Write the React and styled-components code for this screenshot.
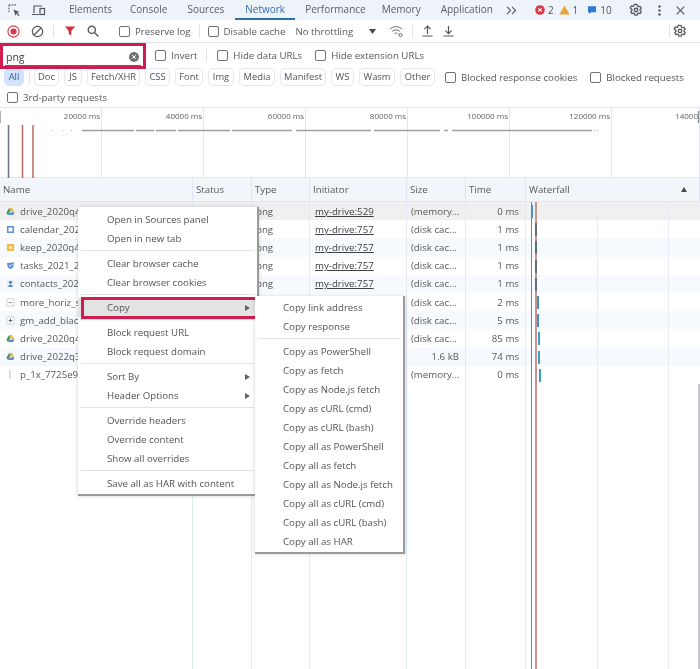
import React from 'react';
import styled, { createGlobalStyle } from 'styled-components';

const GlobalStyle = createGlobalStyle`
  html, body {
    margin: 0;
    padding: 0;
    background: #fff;
  }
  body {
    font-family: 'Open Sans', 'Liberation Sans', sans-serif;
    font-size: 9.7px;
    color: #474747;
  }
`;

const Page = styled.div`
  position: relative;
  width: 700px;
  height: 669px;
  overflow: hidden;
  background: #fff;
  filter: blur(0.4px);
`;

const TabBar = styled.div`
  display: flex;
  align-items: center;
  height: 20px;
  background: #eef2f9;
  padding-left: 7px;
`;

const IconSlot = styled.span`
  display: inline-flex;
  align-items: center;
  justify-content: center;
  flex: none;
  width: ${p => p.$w || 16}px;
  margin-left: ${p => p.$ml || 0}px;
`;

const Tab = styled.span`
  height: 20px;
  line-height: 18px;
  padding: 0 10px;
  margin-left: ${p => p.$ml || 0}px;
  margin-right: ${p => p.$mr || 0}px;
  font-size: 10px;
  color: ${p => (p.$active ? '#2f6db5' : '#5a5d62')};
  border-bottom: 2px solid ${p => (p.$active ? '#2f6db5' : 'transparent')};
  box-sizing: border-box;
  white-space: nowrap;
`;

const Count = styled.span`
  font-size: 10px;
  color: #555;
  margin: 0 ${p => p.$mr || 6}px 0 3px;
`;

const Toolbar = styled.div`
  display: flex;
  align-items: center;
  height: 22px;
  padding-left: 6px;
  border-bottom: 1px solid #e3e6ea;
`;

const Divider = styled.span`
  width: 1px;
  height: 13px;
  background: #dfe2e6;
  flex: none;
  margin: 0 ${p => p.$mr ?? 6}px 0 ${p => p.$ml ?? 6}px;
`;

const CheckLabel = styled.label`
  display: inline-flex;
  align-items: center;
  gap: 5px;
  font-size: 9.7px;
  color: #55585c;
  white-space: nowrap;
  margin-left: ${p => p.$ml || 0}px;
`;

const Box = styled.span`
  width: 9px;
  height: 9px;
  border: 1px solid #6d7075;
  border-radius: 2px;
  flex: none;
`;

const FilterRow = styled.div`
  display: flex;
  align-items: center;
  height: 24px;
`;

const FilterBox = styled.div`
  position: relative;
  display: flex;
  align-items: center;
  justify-content: space-between;
  box-sizing: border-box;
  width: 146px;
  height: 26px;
  margin: 2px 9px 0 0;
  padding: 1px 4px 0 3px;
  border: 3px solid #cf1d52;
  font-size: 10.5px;
  color: #444;
  flex: none;
`;

const FilterUnderline = styled.span`
  position: absolute;
  left: 2px;
  right: 2px;
  bottom: 0;
  height: 1px;
  background: #2f6db5;
`;

const ChipRow = styled.div`
  display: flex;
  align-items: center;
  height: 20px;
  padding-left: 4px;
`;

const Chip = styled.span`
  box-sizing: border-box;
  flex: none;
  width: ${p => p.$w}px;
  height: 18px;
  line-height: 16px;
  margin-right: 5px;
  text-align: center;
  font-size: 9.4px;
  border-radius: 5px;
  border: 1px solid ${p => (p.$on ? '#d3e3fb' : '#e2e8f1')};
  background: ${p => (p.$on ? '#d3e3fb' : '#fff')};
  color: ${p => (p.$on ? '#2f5f9e' : '#505356')};
  white-space: nowrap;
`;

const ThirdRow = styled.div`
  display: flex;
  align-items: center;
  height: 20px;
  padding-left: 7px;
  border-bottom: 1px solid #e3e6ea;
`;

const Overview = styled.div`
  position: relative;
  display: flex;
  height: 70px;
  border-bottom: 1px solid #e3e6ea;
  box-sizing: border-box;
`;

const OverviewCell = styled.div`
  box-sizing: border-box;
  flex: none;
  width: ${p => p.$w}px;
  padding: 2px 1px 0 0;
  text-align: right;
  font-size: 8px;
  color: #5f6266;
  border-right: 1px solid #e2e8f1;
  white-space: nowrap;
  overflow: hidden;
`;

const OverviewChart = styled.svg`
  position: absolute;
  left: 0;
  top: 0;
`;

const Grid = styled.div`
  display: grid;
  grid-template-columns: 193px 59px 58px 97px 59px 60px 174px;
`;

const HeadCell = styled.div`
  box-sizing: border-box;
  display: flex;
  align-items: center;
  justify-content: space-between;
  height: 24px;
  padding: 0 ${p => p.$pr || 4}px 0 3px;
  background: #f2f5fa;
  border-right: 1px solid #dfe6ef;
  border-bottom: 1px solid #dfe6ef;
  font-size: 9.7px;
  color: #55585c;
`;

const Cell = styled.div`
  box-sizing: border-box;
  display: flex;
  align-items: center;
  justify-content: ${p => (p.$right ? 'flex-end' : 'flex-start')};
  gap: 5px;
  height: 18.2px;
  padding: 0 ${p => (p.$right ? 6 : 4)}px 0 ${p => p.$pl || 4}px;
  background: ${p => p.$bg};
  border-right: 1px solid #e3eaf3;
  font-size: 9.7px;
  color: #55585c;
  white-space: nowrap;
  overflow: hidden;
`;

const Link = styled.span`
  text-decoration: underline;
  color: #3f4144;
`;

const Waterfall = styled.div`
  position: relative;
  height: 18.2px;
  background: ${p => p.$bg};
`;

const FallGuide = styled.span`
  position: absolute;
  top: 0;
  bottom: 0;
  left: ${p => p.$x}px;
  width: ${p => p.$w || 1}px;
  background: ${p => p.$color};
`;

const FallBar = styled.span`
  position: absolute;
  top: 3px;
  height: 13px;
  left: ${p => p.$x}px;
  width: ${p => p.$w}px;
  background: ${p => p.$color};
`;

const Filler = styled.div`
  display: grid;
  grid-template-columns: 193px 59px 58px 97px 59px 60px 174px;
  height: 286px;
`;

const FillerColumn = styled.div`
  position: relative;
  border-right: ${p => (p.$last ? '2px solid #c9cbce' : '1px solid #e3eaf3')};
`;

const Menu = styled.div`
  position: absolute;
  left: ${p => p.$x}px;
  top: ${p => p.$y}px;
  width: ${p => p.$w}px;
  box-sizing: border-box;
  padding: ${p => p.$pad};
  background: #fff;
  border-right: 2px solid #9a9a9a;
  border-bottom: 2px solid #9a9a9a;
  box-shadow: 0 0 4px rgba(0, 0, 0, 0.18);
  z-index: ${p => p.$z || 2};
`;

const MenuItem = styled.div`
  position: relative;
  display: flex;
  align-items: center;
  justify-content: space-between;
  box-sizing: border-box;
  height: 19px;
  padding: 0 7px 0 ${p => p.$pl || 29}px;
  font-size: 9.7px;
  color: #505356;
  white-space: nowrap;
  background: ${p => (p.$hl ? '#e3e3e3' : 'transparent')};
`;

const MenuSep = styled.div`
  height: 1px;
  margin: 2px 3px 3px;
  background: #e2e2e2;
`;

const CopyHighlight = styled.div`
  position: absolute;
  inset: -1px -1px -2px 3px;
  border: 3px solid #cf1d52;
  pointer-events: none;
  z-index: 3;
`;

const Arrow = styled.span`
  width: 0;
  height: 0;
  border-left: 5px solid #5f6266;
  border-top: 3.5px solid transparent;
  border-bottom: 3.5px solid transparent;
`;

const SortUp = styled.span`
  width: 0;
  height: 0;
  margin-right: 4px;
  border-bottom: 5px solid #4a4a4a;
  border-left: 3.5px solid transparent;
  border-right: 3.5px solid transparent;
`;

const Gear = ({ size = 14 }) => (
  <svg width={size} height={size} viewBox="0 0 24 24" fill="none" stroke="#55585c" strokeWidth="2.2">
    <path d="M12 2.5l2 .4.7 2.6 1.6.9 2.6-.8 2 3.4-1.9 1.9v1.9l1.9 1.9-2 3.4-2.6-.8-1.6.9-.7 2.6h-4l-.7-2.6-1.6-.9-2.6.8-2-3.4 1.9-1.9v-1.9L2.1 8.4l2-3.4 2.6.8 1.6-.9.7-2.6z" strokeLinejoin="round" />
    <circle cx="12" cy="12" r="3" />
  </svg>
);

const FileIcon = ({ kind }) => {
  if (kind === 'drive') {
    return (
      <svg width="9" height="9" viewBox="0 0 10 10">
        <path d="M3.5 1h3l3 5H6.6z" fill="#e8b93a" />
        <path d="M3.5 1L.5 6.2 2 9l3-5z" fill="#3f9b63" />
        <path d="M2 9h6l1.5-3H3.6z" fill="#5b8fd8" />
      </svg>
    );
  }
  if (kind === 'calendar') {
    return (
      <svg width="9" height="9" viewBox="0 0 10 10">
        <rect x="1" y="1" width="8" height="8" rx="1" fill="#5b8fd8" />
        <rect x="2.8" y="2.8" width="4.4" height="4.4" fill="#fff" />
      </svg>
    );
  }
  if (kind === 'keep') {
    return (
      <svg width="9" height="9" viewBox="0 0 10 10">
        <rect x="1" y="1" width="8" height="8" rx="1" fill="#f2bd42" />
        <circle cx="5" cy="5" r="1.7" fill="#fff3c9" />
      </svg>
    );
  }
  if (kind === 'tasks') {
    return (
      <svg width="9" height="9" viewBox="0 0 10 10">
        <path d="M1 2.5L9 1.5 8 7 5 9.3 2 7z" fill="#5b8fd8" />
        <path d="M3.5 4.5L5 6l2-2.4" stroke="#fff" fill="none" strokeWidth="1" />
      </svg>
    );
  }
  if (kind === 'contacts') {
    return (
      <svg width="9" height="9" viewBox="0 0 10 10">
        <rect x="1" y="1" width="8" height="8" fill="#e8eef8" />
        <circle cx="5" cy="3.8" r="1.5" fill="#2f6db5" />
        <path d="M2.5 8.5C2.5 6 7.5 6 7.5 8.5z" fill="#2f6db5" />
      </svg>
    );
  }
  if (kind === 'more') {
    return (
      <svg width="9" height="9" viewBox="0 0 10 10">
        <rect x="1" y="1" width="8" height="8" fill="#fff" stroke="#c4c6c9" strokeWidth="0.8" />
        <path d="M2.8 5h4.4" stroke="#8b8d90" strokeWidth="1" />
      </svg>
    );
  }
  if (kind === 'add') {
    return (
      <svg width="9" height="9" viewBox="0 0 10 10">
        <rect x="1" y="1" width="8" height="8" fill="#fff" stroke="#c4c6c9" strokeWidth="0.8" />
        <path d="M5 3v4M3 5h4" stroke="#55585c" strokeWidth="1" />
      </svg>
    );
  }
  return (
    <svg width="9" height="9" viewBox="0 0 10 10">
      <path d="M4.5 0v10" stroke="#bfc1c4" strokeWidth="1.2" />
    </svg>
  );
};

const bars = {
  first: { x: 4.5, w: 2.5, color: '#3d93c9' },
  grey: { x: 9, w: 2, color: '#5f6f80' },
  mid: { x: 10.5, w: 2.5, color: '#3d93c9' },
  late: { x: 12, w: 2, color: '#36a0c9' },
  last: { x: 13, w: 2, color: '#36a0c9' },
};

const rows = [
  { name: 'drive_2020q4', icon: 'drive', init: 'my-drive:529', size: '(memory...', time: '0 ms', bar: bars.first },
  { name: 'calendar_2020', icon: 'calendar', init: 'my-drive:757', size: '(disk cac...', time: '1 ms', bar: bars.grey },
  { name: 'keep_2020q4', icon: 'keep', init: 'my-drive:757', size: '(disk cac...', time: '1 ms', bar: bars.grey },
  { name: 'tasks_2021_2', icon: 'tasks', init: 'my-drive:757', size: '(disk cac...', time: '1 ms', bar: bars.grey },
  { name: 'contacts_2022', icon: 'contacts', init: 'my-drive:757', size: '(disk cac...', time: '1 ms', bar: bars.grey },
  { name: 'more_horiz_s', icon: 'more', size: '(disk cac...', time: '2 ms', bar: bars.mid },
  { name: 'gm_add_black', icon: 'add', size: '(disk cac...', time: '5 ms', bar: bars.mid },
  { name: 'drive_2020q4', icon: 'drive', size: '(disk cac...', time: '85 ms', bar: bars.late },
  { name: 'drive_2022q3', icon: 'drive', size: '1.6 kB', right: true, time: '74 ms', bar: bars.late },
  { name: 'p_1x_7725e9', icon: 'line', size: '(memory...', time: '0 ms', bar: bars.last },
];

const chips = [
  ['Doc', 25],
  ['JS', 18],
  ['Fetch/XHR', 53],
  ['CSS', 25],
  ['Font', 28],
  ['Img', 26],
  ['Media', 36],
  ['Manifest', 46],
  ['WS', 23],
  ['Wasm', 36],
  ['Other', 35],
];

const mainMenu = [
  ['Open in Sources panel', 'Open in new tab'],
  ['Clear browser cache', 'Clear browser cookies'],
  ['Copy'],
  ['Block request URL', 'Block request domain'],
  ['Sort By', 'Header Options'],
  ['Override headers', 'Override content', 'Show all overrides'],
  ['Save all as HAR with content'],
];

const copyMenu = [
  ['Copy link address', 'Copy response'],
  [
    'Copy as PowerShell',
    'Copy as fetch',
    'Copy as Node.js fetch',
    'Copy as cURL (cmd)',
    'Copy as cURL (bash)',
    'Copy all as PowerShell',
    'Copy all as fetch',
    'Copy all as Node.js fetch',
    'Copy all as cURL (cmd)',
    'Copy all as cURL (bash)',
    'Copy all as HAR',
  ],
];

const hasArrow = label => label === 'Sort By' || label === 'Header Options';

const WaterfallLines = () => (
  <>
    <FallGuide $x={71} $color="#e8ecf2" />
    <FallGuide $x={142} $color="#e8ecf2" />
    <FallGuide $x={5} $color="#4f8fc0" />
    <FallGuide $x={9} $w={2} $color="#c9948c" />
  </>
);

const App = () => {
  return (
    <Page>
      <GlobalStyle />
      <TabBar>
        <IconSlot $w={14}>
          <svg width="13" height="13" viewBox="0 0 14 14" fill="none" stroke="#55585c" strokeWidth="1.2">
            <path d="M1 1h8M1 1v8" strokeDasharray="1.6 1.4" />
            <path d="M6 6l6.5 2.5-2.5 1 2.5 3-1 .8-2.6-3-1 2.6z" fill="#55585c" stroke="none" />
          </svg>
        </IconSlot>
        <IconSlot $w={16} $ml={9}>
          <svg width="15" height="13" viewBox="0 0 15 13" fill="none" stroke="#55585c" strokeWidth="1.2">
            <path d="M3 9V2h8M1 10.5h7" />
            <rect x="9" y="4.5" width="4.5" height="6" />
          </svg>
        </IconSlot>
        <Tab $ml={13} $mr={-2}>Elements</Tab>
        <Tab>Console</Tab>
        <Tab $mr={1}>Sources</Tab>
        <Tab $active>Network</Tab>
        <Tab $mr={-4}>Performance</Tab>
        <Tab>Memory</Tab>
        <Tab>Application</Tab>
        <IconSlot $w={12} $ml={3}>
          <svg width="11" height="9" viewBox="0 0 11 9" fill="none" stroke="#55585c" strokeWidth="1.1">
            <path d="M1 .8L4.6 4.5 1 8.2M6 .8l3.6 3.7L6 8.2" />
          </svg>
        </IconSlot>
        <IconSlot $w={10} $ml={17}>
          <svg width="10" height="10" viewBox="0 0 10 10">
            <circle cx="5" cy="5" r="4.8" fill="#d93a45" />
            <path d="M3.3 3.3l3.4 3.4M6.7 3.3L3.3 6.7" stroke="#fff" strokeWidth="1.1" />
          </svg>
        </IconSlot>
        <Count $mr={5}>2</Count>
        <IconSlot $w={11}>
          <svg width="11" height="10" viewBox="0 0 11 10">
            <path d="M5.5.5L10.7 9.5H.3z" fill="#e8a33a" />
          </svg>
        </IconSlot>
        <Count $mr={9}>1</Count>
        <IconSlot $w={10}>
          <svg width="10" height="10" viewBox="0 0 10 10">
            <path d="M1 1.2h8v6H4L2 9V7.2H1z" fill="#2f78d3" />
          </svg>
        </IconSlot>
        <Count $mr={17}>10</Count>
        <IconSlot $w={14}>
          <Gear size={14} />
        </IconSlot>
        <IconSlot $w={4} $ml={15}>
          <svg width="3" height="11" viewBox="0 0 3 11" fill="#55585c">
            <circle cx="1.5" cy="1.5" r="1.2" />
            <circle cx="1.5" cy="5.5" r="1.2" />
            <circle cx="1.5" cy="9.5" r="1.2" />
          </svg>
        </IconSlot>
        <IconSlot $w={10} $ml={14}>
          <svg width="9" height="9" viewBox="0 0 9 9" stroke="#55585c" strokeWidth="1.2">
            <path d="M.7.7l7.6 7.6M8.3.7L.7 8.3" />
          </svg>
        </IconSlot>
      </TabBar>

      <Toolbar>
        <IconSlot $w={14}>
          <svg width="13" height="13" viewBox="0 0 14 14">
            <circle cx="7" cy="7" r="6" fill="none" stroke="#d6374a" strokeWidth="1.2" />
            <circle cx="7" cy="7" r="3.3" fill="#d6374a" />
          </svg>
        </IconSlot>
        <IconSlot $w={14} $ml={10}>
          <svg width="13" height="13" viewBox="0 0 14 14" fill="none" stroke="#55585c" strokeWidth="1.3">
            <circle cx="7" cy="7" r="5.6" />
            <path d="M3 11L11 3" />
          </svg>
        </IconSlot>
        <Divider $ml={9} $mr={9} />
        <IconSlot $w={11} $ml={1}>
          <svg width="10" height="10" viewBox="0 0 10 10">
            <path d="M0 .5h10L6.2 5v4.5L3.8 8V5z" fill="#d92b3a" />
          </svg>
        </IconSlot>
        <IconSlot $w={14} $ml={11}>
          <svg width="12" height="12" viewBox="0 0 12 12" fill="none" stroke="#55585c" strokeWidth="1.4">
            <circle cx="4.8" cy="4.8" r="3.6" />
            <path d="M7.5 7.5L11.4 11.4" />
          </svg>
        </IconSlot>
        <CheckLabel $ml={19}>
          <Box />
          Preserve log
        </CheckLabel>
        <Divider $ml={8} $mr={8} />
        <CheckLabel>
          <Box />
          Disable cache
        </CheckLabel>
        <CheckLabel $ml={10}>No throttling</CheckLabel>
        <IconSlot $w={8} $ml={15}>
          <svg width="7" height="5" viewBox="0 0 7 5">
            <path d="M0 0h7L3.5 5z" fill="#4a4a4a" />
          </svg>
        </IconSlot>
        <IconSlot $w={16} $ml={12}>
          <svg width="15" height="13" viewBox="0 0 15 13" fill="none" stroke="#6a6d71" strokeWidth="1">
            <path d="M1 4c3.5-3.2 8.5-3.2 12 0M3.2 6.4c2.2-2 5.4-2 7.6 0M5.5 8.6c.9-.7 2.1-.7 3 0" />
            <circle cx="11.5" cy="10" r="1.6" />
          </svg>
        </IconSlot>
        <Divider $ml={8} $mr={8} />
        <IconSlot $w={12}>
          <svg width="11" height="12" viewBox="0 0 11 12" fill="none" stroke="#55585c" strokeWidth="1.2">
            <path d="M5.5 9V1.2M2.4 4.2l3.1-3.1 3.1 3.1M.5 11h10" />
          </svg>
        </IconSlot>
        <IconSlot $w={12} $ml={9}>
          <svg width="11" height="12" viewBox="0 0 11 12" fill="none" stroke="#55585c" strokeWidth="1.2">
            <path d="M5.5 1v7.6M2.4 5.6l3.1 3.1 3.1-3.1M.5 11h10" />
          </svg>
        </IconSlot>
        <Divider $ml={215} $mr={0} />
        <IconSlot $w={14} $ml={3}>
          <Gear size={14} />
        </IconSlot>
      </Toolbar>

      <FilterRow>
        <FilterBox>
          png
          <svg width="10" height="10" viewBox="0 0 10 10">
            <circle cx="5" cy="5" r="5" fill="#707377" />
            <path d="M3.2 3.2l3.6 3.6M6.8 3.2L3.2 6.8" stroke="#fff" strokeWidth="1" />
          </svg>
          <FilterUnderline />
        </FilterBox>
        <CheckLabel>
          <Box />
          Invert
        </CheckLabel>
        <Divider $ml={9} $mr={10} />
        <CheckLabel>
          <Box />
          Hide data URLs
        </CheckLabel>
        <CheckLabel $ml={13}>
          <Box />
          Hide extension URLs
        </CheckLabel>
      </FilterRow>

      <ChipRow>
        <Chip $on $w={20}>All</Chip>
        <Divider $ml={0} $mr={4} />
        {chips.map(([label, w]) => (
          <Chip key={label} $w={w}>{label}</Chip>
        ))}
        <CheckLabel $ml={5}>
          <Box />
          Blocked response cookies
        </CheckLabel>
        <CheckLabel $ml={13}>
          <Box />
          Blocked requests
        </CheckLabel>
      </ChipRow>

      <ThirdRow>
        <CheckLabel>
          <Box />
          3rd-party requests
        </CheckLabel>
      </ThirdRow>

      <Overview>
        <OverviewCell $w={102}>20000 ms</OverviewCell>
        <OverviewCell $w={102}>40000 ms</OverviewCell>
        <OverviewCell $w={102}>60000 ms</OverviewCell>
        <OverviewCell $w={102}>80000 ms</OverviewCell>
        <OverviewCell $w={102}>100000 ms</OverviewCell>
        <OverviewCell $w={102}>120000 ms</OverviewCell>
        <OverviewCell $w={88}>14000</OverviewCell>
        <OverviewChart width="700" height="70" viewBox="0 0 700 70">
          <path d="M8.5 17V70" stroke="#6b6f8a" strokeWidth="1.5" />
          <path d="M22.5 17V70M33 17V70" stroke="#c4716f" strokeWidth="1.6" />
          <path d="M82 22.5h52M136 22.5h18M156 22.5h20M178 22.5h52M232 22.5h60M296 22.5h75M374 22.5h66M444 22.5h4M452 22.5h140" stroke="#9d9fa2" strokeWidth="1.5" />
          <path d="M52 22.5h1M62 22.5h1M71 22.5h1M594 22.5h1M597 22.5h1" stroke="#b5b7ba" strokeWidth="1.2" />
          <path d="M0 3v12M698.5 3v12" stroke="#8f9296" strokeWidth="1.4" />
        </OverviewChart>
      </Overview>

      <Grid>
        <HeadCell>Name</HeadCell>
        <HeadCell>Status</HeadCell>
        <HeadCell>Type</HeadCell>
        <HeadCell>Initiator</HeadCell>
        <HeadCell>Size</HeadCell>
        <HeadCell>Time</HeadCell>
        <HeadCell $pr={8}>
          Waterfall
          <SortUp />
        </HeadCell>
        {rows.map((row, i) => {
          const bg = i === 0 ? '#f0f0f0' : i % 2 === 1 ? '#fff' : '#f6f9fd';
          return (
            <React.Fragment key={i}>
              <Cell $bg={bg} $pl={6}>
                <FileIcon kind={row.icon} />
                {row.name}
              </Cell>
              <Cell $bg={bg} />
              <Cell $bg={bg}>{i < 5 ? 'png' : ''}</Cell>
              <Cell $bg={bg} $pl={5}>{row.init ? <Link>{row.init}</Link> : null}</Cell>
              <Cell $bg={bg} $right={row.right}>{row.size}</Cell>
              <Cell $bg={bg} $right>{row.time}</Cell>
              <Waterfall $bg={bg}>
                <WaterfallLines />
                <FallBar $x={row.bar.x} $w={row.bar.w} $color={row.bar.color} />
              </Waterfall>
            </React.Fragment>
          );
        })}
      </Grid>

      <Filler>
        <FillerColumn />
        <FillerColumn />
        <FillerColumn />
        <FillerColumn />
        <FillerColumn />
        <FillerColumn />
        <FillerColumn $last>
          <WaterfallLines />
        </FillerColumn>
      </Filler>

      <Menu $x={78} $y={207} $w={181} $pad="3px 0 1px">
        {mainMenu.map((group, g) => (
          <React.Fragment key={g}>
            {g > 0 && <MenuSep />}
            {group.map(label => (
              <MenuItem key={label} $hl={label === 'Copy'}>
                {label}
                {(hasArrow(label) || label === 'Copy') && <Arrow />}
                {label === 'Copy' && <CopyHighlight />}
              </MenuItem>
            ))}
          </React.Fragment>
        ))}
      </Menu>

      <Menu $x={255} $y={296} $w={150} $z={4} $pad="1.5px 0 1px">
        {copyMenu.map((group, g) => (
          <React.Fragment key={g}>
            {g > 0 && <MenuSep />}
            {group.map(label => (
              <MenuItem key={label} $pl={28}>
                {label}
              </MenuItem>
            ))}
          </React.Fragment>
        ))}
      </Menu>
    </Page>
  );
};

export default App;
